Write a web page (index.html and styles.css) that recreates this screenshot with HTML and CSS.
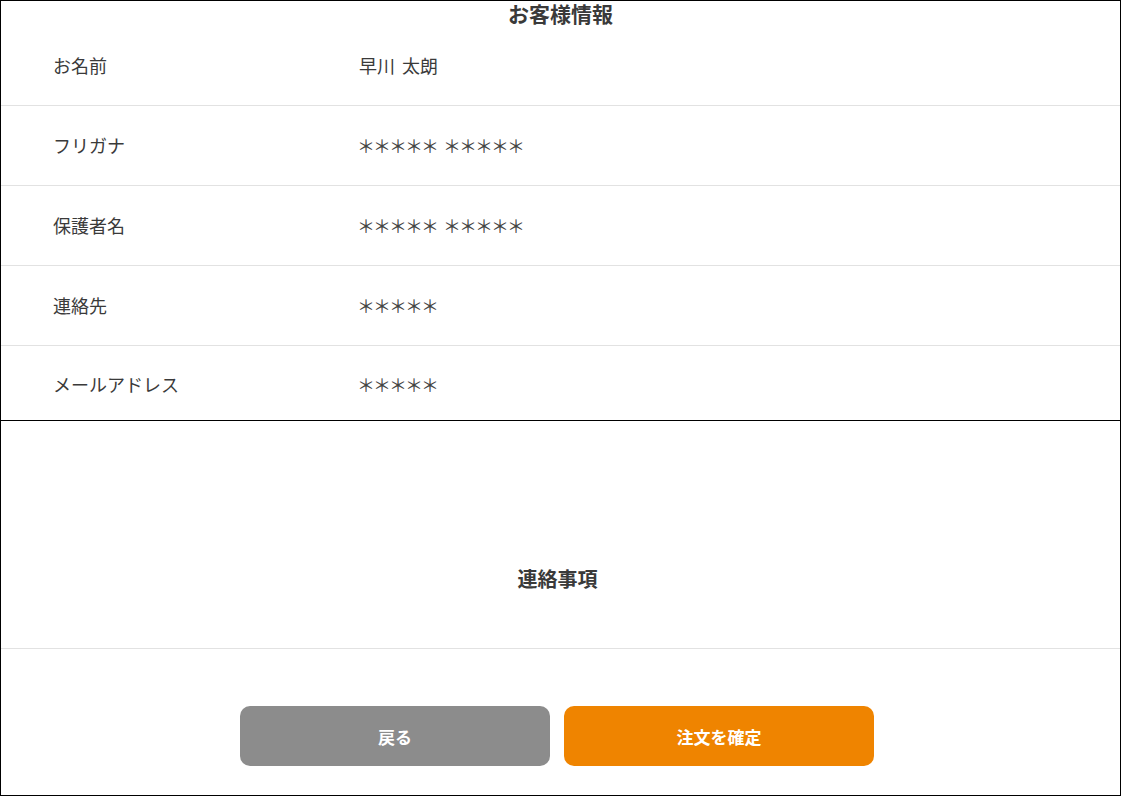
FILE: index.html
```html
<!DOCTYPE html>
<html lang="ja">
<head>
    <meta charset="UTF-8">
    <meta name="viewport" content="width=device-width, initial-scale=1.0">
    <title>ご注文内容の確認</title>
    <link rel="stylesheet" href="styles.css">
</head>
<body>
    <div class="page">
        <section class="info">
            <h2 class="section-title">お客様情報</h2>
            <div class="row first">
                <div class="label">お名前</div>
                <div class="value">早川 太朗</div>
            </div>
            <div class="row">
                <div class="label">フリガナ</div>
                <div class="value masked">＊＊＊＊＊ ＊＊＊＊＊</div>
            </div>
            <div class="row">
                <div class="label">保護者名</div>
                <div class="value masked">＊＊＊＊＊ ＊＊＊＊＊</div>
            </div>
            <div class="row">
                <div class="label">連絡先</div>
                <div class="value masked">＊＊＊＊＊</div>
            </div>
            <div class="row last">
                <div class="label">メールアドレス</div>
                <div class="value masked">＊＊＊＊＊</div>
            </div>
        </section>

        <section class="notes">
            <h2 class="notes-title">連絡事項</h2>
        </section>

        <div class="actions">
            <button class="btn btn-back">戻る</button>
            <button class="btn btn-confirm">注文を確定</button>
        </div>
    </div>
</body>
</html>
```

FILE: styles.css
```css
* {
    box-sizing: border-box;
}

body {
    margin: 0;
    padding: 0;
    font-family: "Noto Sans CJK JP", "Noto Sans", sans-serif;
    color: #333;
    background: #fff;
}

.page {
    width: 1121px;
    height: 796px;
    border: 1px solid #000;
    display: flex;
    flex-direction: column;
}

.section-title {
    margin: 0;
    height: 25px;
    line-height: 25px;
    font-size: 21px;
    font-weight: bold;
    text-align: center;
    color: #3a3a3a;
}

.row {
    display: grid;
    grid-template-columns: 306px 1fr;
    align-items: center;
    height: 80px;
    padding: 0 52px 2px;
    border-bottom: 1px solid #e2e2e2;
    font-size: 18px;
}

.row.last {
    height: 74px;
    border-bottom: none;
    padding-top: 4px;
}

.label,
.value {
    color: #3a3a3a;
}

.value {
    word-spacing: 3px;
}

.value.masked {
    color: #444;
    letter-spacing: -2px;
    word-spacing: 4px;
    margin-left: -2px;
}

.notes {
    border-top: 1px solid #000;
    border-bottom: 1px solid #e2e2e2;
    height: 229px;
    padding-top: 143px;
}

.notes-title {
    margin: 0;
    line-height: 30px;
    font-size: 20px;
    font-weight: bold;
    text-align: center;
    color: #3a3a3a;
    padding-right: 6px;
}

.actions {
    display: flex;
    justify-content: center;
    gap: 14px;
    padding-top: 57px;
    padding-right: 7px;
}

.btn {
    width: 310px;
    height: 60px;
    border: none;
    border-radius: 10px;
    color: #fff;
    font-family: inherit;
    font-size: 17px;
    font-weight: bold;
    cursor: pointer;
}

.btn-back {
    background: #8c8c8c;
}

.btn-confirm {
    background: #ef8400;
}
```
